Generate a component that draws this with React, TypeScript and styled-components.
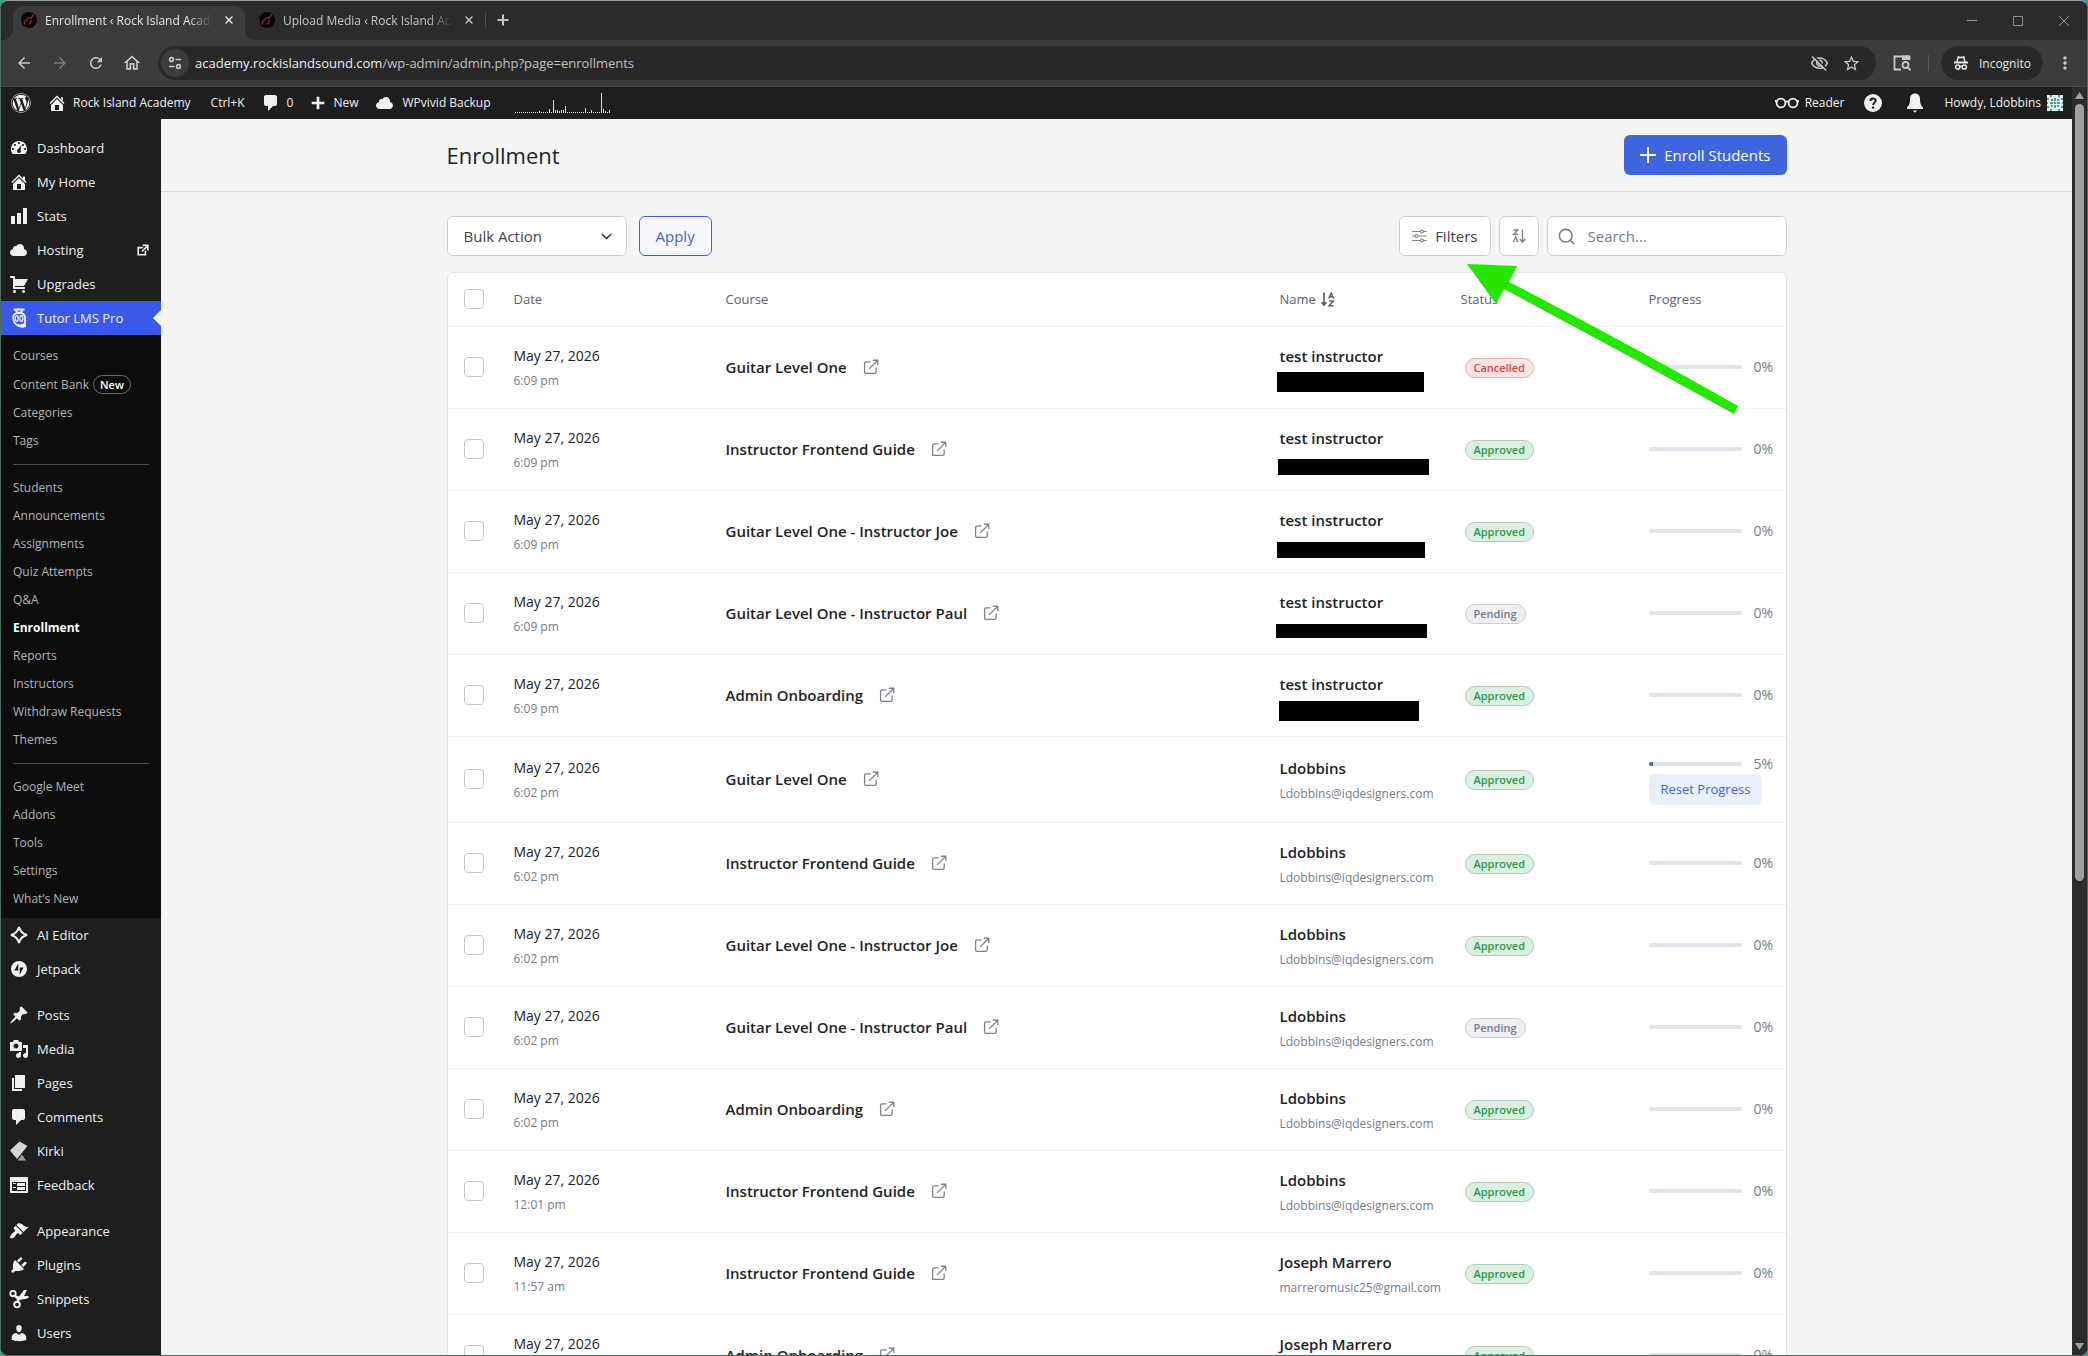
import React from "react";
import styled, { createGlobalStyle, css } from "styled-components";
import { FaWordpress } from "react-icons/fa";
import {
  MdArrowBack,
  MdArrowForward,
  MdMoreVert,
  MdOutlineHome,
  MdOutlineVisibilityOff,
  MdRefresh,
  MdStarBorder,
} from "react-icons/md";
import { ChevronDown, Plus, Search, X } from "lucide-react";

const sans = `"Open Sans", "Noto Sans", "Liberation Sans", sans-serif`;

const GlobalStyle = createGlobalStyle`
  *, *::before, *::after { box-sizing: border-box; }
  body {
    margin: 0;
    background: #3f9a86;
    font-family: ${sans};
    font-size: 14px;
    color: #212327;
  }
  button, input, select { font: inherit; color: inherit; }
  button { cursor: pointer; }
  a { color: inherit; text-decoration: none; }
  ul { list-style: none; margin: 0; padding: 0; }
  svg { display: block; flex: none; }
`;

/* ---------- window ---------- */

const Window = styled.div`
  display: flex;
  flex-direction: column;
  height: 100vh;
  overflow: hidden;
  border: 1px solid #47715f;
  border-top-color: #9aa19c;
  border-radius: 8px;
  background: #1e1e1e;
`;

const TabStrip = styled.div`
  display: flex;
  align-items: flex-end;
  flex: none;
  height: 39px;
  padding-left: 12px;
  background: #2b2b2b;
  color: #c7c7c7;
`;

const Tab = styled.div<{ $active?: boolean }>`
  position: relative;
  display: flex;
  align-items: center;
  gap: 8px;
  width: ${(p) => (p.$active ? 232 : 240)}px;
  height: 34px;
  padding: 0 8px 6px ${(p) => (p.$active ? 8 : 14)}px;
  border-radius: 10px 10px 0 0;
  font-size: 12px;
  ${(p) =>
    p.$active &&
    css`
      background: #3c3c3c;
      color: #e6e6e6;
      &::before,
      &::after {
        content: "";
        position: absolute;
        bottom: 0;
        width: 10px;
        height: 10px;
      }
      &::before {
        left: -10px;
        background: radial-gradient(circle at 0 0, transparent 10px, #3c3c3c 10px);
      }
      &::after {
        right: -10px;
        background: radial-gradient(circle at 100% 0, transparent 10px, #3c3c3c 10px);
      }
    `}
`;

const TabTitle = styled.span`
  flex: 1;
  min-width: 0;
  overflow: hidden;
  white-space: nowrap;
  mask-image: linear-gradient(to right, #000 85%, transparent);
`;

const PlainButton = styled.button`
  display: flex;
  align-items: center;
  justify-content: center;
  padding: 0;
  border: 0;
  background: none;
`;

const TabClose = styled(PlainButton)`
  width: 16px;
  height: 16px;
`;

const NewTab = styled(PlainButton)`
  width: 34px;
  height: 28px;
  margin-bottom: 6px;
`;

const TabDivider = styled.span`
  width: 1px;
  height: 16px;
  margin-bottom: 12px;
  background: #4a4a4a;
`;

const WindowButtons = styled.div`
  display: flex;
  margin-left: auto;
  align-self: stretch;
  align-items: center;
  color: #8f8f8f;
`;

const WindowButton = styled(PlainButton)`
  width: 46px;
  height: 38px;
`;

const Toolbar = styled.div`
  display: flex;
  align-items: center;
  flex: none;
  height: 47px;
  padding: 0 12px 0 5px;
  border-bottom: 1px solid #4a4a4a;
  background: #3c3c3c;
  color: #c9c9c9;
`;

const NavButton = styled(PlainButton)<{ $dim?: boolean }>`
  width: 36px;
  height: 34px;
  color: ${(p) => (p.$dim ? "#7b7b7b" : "#c9c9c9")};
`;

const Omnibox = styled.div`
  display: flex;
  align-items: center;
  flex: 1;
  height: 34px;
  margin-left: 8px;
  padding: 0 8px 0 3px;
  border-radius: 17px;
  background: #282828;
`;

const SiteInfo = styled.span`
  display: flex;
  align-items: center;
  justify-content: center;
  width: 28px;
  height: 28px;
  border-radius: 14px;
  background: #3c3c3c;
`;

const Url = styled.span`
  flex: 1;
  margin-left: 6px;
  font-size: 13px;
  color: #c0c0c0;
  b { font-weight: 400; color: #ececec; }
`;

const OmniButton = styled(PlainButton)`
  width: 32px;
  height: 28px;
`;

const PanelButton = styled(PlainButton)`
  width: 34px;
  height: 34px;
  margin: 0 9px;
`;

const ToolDivider = styled.span`
  width: 1px;
  height: 16px;
  margin-right: 12px;
  background: #5b5b5b;
`;

const Incognito = styled.button`
  display: flex;
  align-items: center;
  gap: 10px;
  height: 34px;
  margin-right: 12px;
  padding: 0 12px;
  border: 0;
  border-radius: 17px;
  background: #282828;
  color: #e6e6e6;
  font-size: 12px;
`;

/* ---------- WordPress chrome ---------- */

const Page = styled.div`
  display: flex;
  flex: 1;
  min-height: 0;
`;

const Document = styled.div`
  display: flex;
  flex-direction: column;
  flex: 1;
  min-width: 0;
`;

const AdminBar = styled.nav`
  display: flex;
  align-items: center;
  flex: none;
  height: 32px;
  padding: 0 9px 0 10px;
  background: #1e1e1e;
  color: #f0f0f1;
  font-size: 12px;
`;

const BarLink = styled.a<{ $gap?: number; $ml?: number }>`
  display: flex;
  align-items: center;
  gap: ${(p) => p.$gap ?? 6}px;
  margin-left: ${(p) => p.$ml ?? 16}px;
  line-height: 32px;
  white-space: nowrap;
`;

const BarRight = styled.div`
  display: flex;
  align-items: center;
  margin-left: auto;
`;

const Columns = styled.div`
  display: flex;
  flex: 1;
  min-height: 0;
  overflow: hidden;
`;

const Sidebar = styled.nav`
  flex: none;
  width: 160px;
  padding-top: 12px;
  background: #1e1e1e;
  color: #f0f0f1;
`;

const MenuLink = styled.a<{ $current?: boolean; $gapTop?: boolean }>`
  position: relative;
  display: flex;
  align-items: center;
  gap: 8px;
  height: 34px;
  margin-top: ${(p) => (p.$gapTop ? 12 : 0)}px;
  padding: 0 10px 0 8px;
  font-size: 13px;
  ${(p) =>
    p.$current &&
    css`
      background: #3b59e8;
      &::after {
        content: "";
        position: absolute;
        right: 0;
        top: 9px;
        border: 8px solid transparent;
        border-left: 0;
        border-right-color: #f5f5f5;
      }
    `}
`;

const MenuLabel = styled.span`
  flex: 1;
`;

const SubMenu = styled.ul`
  padding: 7px 12px 5px;
  background: #0d0d0d;
`;

const SubLink = styled.a<{ $current?: boolean }>`
  display: flex;
  align-items: center;
  gap: 4px;
  padding: 5px 0;
  line-height: 18px;
  font-size: 12px;
  white-space: nowrap;
  color: ${(p) => (p.$current ? "#ffffff" : "#b4b4b5")};
  font-weight: ${(p) => (p.$current ? 700 : 400)};
`;

const SubDivider = styled.li`
  height: 1px;
  margin: 9px 0;
  background: #4d4d4d;
`;

const NewBadge = styled.span`
  padding: 0 6px;
  border: 1px solid #6a6a6a;
  border-radius: 10px;
  line-height: 17px;
  font-size: 11px;
  font-weight: 600;
  color: #ffffff;
`;

const ScrollBar = styled.div`
  display: flex;
  flex-direction: column;
  align-items: center;
  flex: none;
  width: 15px;
  padding: 5px 0;
  background: #2c2c2c;
`;

const ScrollTrack = styled.div`
  flex: 1;
  width: 9px;
  margin: 5px 0;
`;

const ScrollThumb = styled.div`
  height: 63%;
  border-radius: 5px;
  background: #9f9f9f;
`;

/* ---------- content ---------- */

const Main = styled.main`
  flex: 1;
  min-width: 0;
  background: #f5f5f5;
`;

const Header = styled.header`
  border-bottom: 1px solid #dcdcdd;
`;

const Container = styled.div`
  max-width: 1340px;
  margin: 0 auto;
`;

const HeaderRow = styled(Container)`
  display: flex;
  align-items: center;
  justify-content: space-between;
  padding: 16px 0;
`;

const Title = styled.h1`
  margin: 0;
  font-size: 22px;
  line-height: 32px;
  font-weight: 400;
`;

const PrimaryButton = styled.button`
  display: flex;
  align-items: center;
  gap: 8px;
  height: 40px;
  padding: 0 16px;
  border: 0;
  border-radius: 6px;
  background: #3e64de;
  color: #ffffff;
  font-size: 15px;
`;

const Body = styled(Container)`
  position: relative;
  padding-top: 24px;
`;

const Controls = styled.div`
  display: flex;
  align-items: center;
  gap: 8px;
  margin-bottom: 16px;
`;

const SelectBox = styled.label`
  display: grid;
  align-items: center;
  width: 180px;
  margin-right: 4px;
  color: #41454f;
  > * { grid-area: 1 / 1; }
  > svg { justify-self: end; margin-right: 12px; pointer-events: none; }
`;

const Select = styled.select`
  appearance: none;
  width: 100%;
  height: 40px;
  padding: 0 16px;
  border: 1px solid #cdcfd5;
  border-radius: 6px;
  background: #ffffff;
  font-size: 15px;
`;

const ApplyButton = styled.button`
  height: 40px;
  margin-right: auto;
  padding: 0 16px;
  border: 1px solid #3e64de;
  border-radius: 6px;
  background: #f6f8fe;
  color: #4565cb;
  font-size: 15px;
`;

const ToolButton = styled.button`
  display: flex;
  align-items: center;
  justify-content: center;
  gap: 8px;
  min-width: 40px;
  height: 40px;
  padding: 0 12px;
  border: 1px solid #cdcfd5;
  border-radius: 6px;
  background: #ffffff;
  color: #41454f;
  font-size: 15px;
  > svg { color: #7d828c; }
`;

const SearchBox = styled.label`
  display: flex;
  align-items: center;
  gap: 12px;
  width: 240px;
  height: 40px;
  padding: 0 9px;
  border: 1px solid #cdcfd5;
  border-radius: 6px;
  background: #ffffff;
  color: #757c8e;
`;

const SearchInput = styled.input`
  flex: 1;
  min-width: 0;
  padding: 0;
  border: 0;
  outline: 0;
  background: none;
  font-size: 15px;
  &::placeholder { color: #757c8e; opacity: 1; }
`;

const TableCard = styled.div`
  border: 1px solid #e3e5ea;
  border-radius: 6px;
  background: #ffffff;
`;

const Table = styled.table`
  width: 100%;
  table-layout: fixed;
  border-collapse: collapse;
`;

const Col = styled.col<{ $w?: number }>`
  width: ${(p) => (p.$w ? `${p.$w}px` : "auto")};
`;

const Th = styled.th`
  height: 53px;
  padding: 0 16px;
  text-align: left;
  font-size: 13px;
  font-weight: 400;
  color: #5b616f;
`;

const ThSort = styled.span`
  display: flex;
  align-items: center;
  gap: 5px;
`;

const Tr = styled.tr<{ $tall?: boolean }>`
  height: ${(p) => (p.$tall ? 86 : 82)}px;
  border-top: 1px solid #f0f1f2;
`;

const Td = styled.td<{ $inset?: boolean }>`
  padding: 0 0 0 ${(p) => (p.$inset ? 20 : 16)}px;
  vertical-align: middle;
`;

const Checkbox = styled.input`
  display: block;
  appearance: none;
  width: 20px;
  height: 20px;
  margin: 0;
  border: 1px solid #c4c7cf;
  border-radius: 4px;
  background: #ffffff;
`;

const DateText = styled.div`
  line-height: 24px;
  margin-bottom: 4px;
  font-size: 14px;
`;

const TimeText = styled.div`
  line-height: 18px;
  font-size: 12px;
  color: #757c8e;
`;

const Course = styled.div`
  display: flex;
  align-items: center;
  gap: 16px;
  font-size: 15px;
  font-weight: 600;
`;

const CourseLink = styled.a`
  color: #7d828c;
`;

const StudentName = styled.div`
  line-height: 26px;
  margin-bottom: 4px;
  font-size: 15px;
  font-weight: 600;
`;

const Email = styled.div`
  position: relative;
  height: 18px;
  line-height: 18px;
  font-size: 12px;
  color: #757c8e;
`;

const Redaction = styled.span<{ $x: number; $y: number; $w: number; $h: number }>`
  position: absolute;
  left: ${(p) => p.$x}px;
  top: ${(p) => p.$y}px;
  width: ${(p) => p.$w}px;
  height: ${(p) => p.$h}px;
  background: #000000;
`;

type Status = "Approved" | "Pending" | "Cancelled";

const tones: Record<Status, string> = {
  Approved: "color: #2a9a47; background: #dcf0e2; border-color: #a9cfb5;",
  Pending: "color: #757c8e; background: #eff0f3; border-color: #cbced6;",
  Cancelled: "color: #e0443c; background: #fde3e2; border-color: #f0aaa8;",
};

const Badge = styled.span<{ $status: Status }>`
  display: inline-block;
  padding: 0 8px;
  border: 1px solid;
  border-radius: 10px;
  line-height: 18px;
  font-size: 11px;
  font-weight: 600;
  vertical-align: middle;
  ${(p) => tones[p.$status]}
`;

const ProgressLine = styled.div`
  display: flex;
  align-items: center;
  gap: 12px;
  line-height: 20px;
  font-size: 14px;
  color: #757c8e;
`;

const Track = styled.div`
  width: 93px;
  height: 4px;
  border-radius: 2px;
  overflow: hidden;
  background: #e3e4ea;
`;

const Fill = styled.div`
  height: 100%;
  background: #3e64de;
`;

const ResetButton = styled.button`
  display: block;
  height: 31px;
  padding: 0 12px;
  border: 0;
  border-radius: 6px;
  background: #eaeffc;
  color: #4565cb;
  font-size: 13px;
`;

const Pointer = styled.svg`
  position: absolute;
  top: 71px;
  right: 48px;
  pointer-events: none;
`;

/* ---------- drawings ---------- */

const Dash = ({ d, size = 20 }: { d: string; size?: number }) => (
  <svg width={size} height={size} viewBox="0 0 20 20" fill="currentColor" fillRule="evenodd">
    <path d={d} />
  </svg>
);

const dash = {
  dashboard:
    "M3.76 16h12.48c1.1-1.37 1.76-3.11 1.76-5 0-4.42-3.58-8-8-8s-8 3.58-8 8c0 1.89.66 3.63 1.76 5zM10 4c.55 0 1 .45 1 1s-.45 1-1 1-1-.45-1-1 .45-1 1-1zM6 6c.55 0 1 .45 1 1s-.45 1-1 1-1-.45-1-1 .45-1 1-1zm8 0c.55 0 1 .45 1 1s-.45 1-1 1-1-.45-1-1 .45-1 1-1zm-1.6 1.3L11.5 12.2c.3.3.4.7.4 1 0 1.1-.8 1.8-1.9 1.8s-2-.9-2-2c0-.9.6-1.6 1.4-1.9zM4 10c.55 0 1 .45 1 1s-.45 1-1 1-1-.45-1-1 .45-1 1-1zm12 0c.55 0 1 .45 1 1s-.45 1-1 1-1-.45-1-1 .45-1 1-1z",
  home: "M16 8.5l1.53 1.53-1.06 1.06L10 4.6l-6.47 6.49-1.06-1.06L10 2.5l4 4v-2h2v4zm-6-2.46l6 5.99V18H4v-5.97zM12 17v-5H8v5h4z",
  stats: "M18 18V2h-4v16h4zm-6 0V7H8v11h4zm-6 0v-8H2v8h4z",
  cloud:
    "M14.9 9c1.8.2 3.1 1.7 3.1 3.5 0 1.9-1.6 3.5-3.5 3.5h-10C2.6 16 1 14.4 1 12.5 1 10.7 2.3 9.3 4.1 9 4 8.9 4 8.7 4 8.5 4 7.1 5.1 6 6.5 6c.3 0 .7.1.9.2C8.1 4.9 9.4 4 11 4c2.2 0 4 1.8 4 4 0 .4-.1.7-.1 1z",
  cart: "M6 13h9c.55 0 1 .45 1 1s-.45 1-1 1H5c-.55 0-1-.45-1-1V4H2c-.55 0-1-.45-1-1s.45-1 1-1h3c.55 0 1 .45 1 1v2h13l-4 7H6v1zm-.5 3c.83 0 1.5.67 1.5 1.5S6.33 19 5.5 19 4 18.33 4 17.5 4.67 16 5.5 16zm9 0c.83 0 1.5.67 1.5 1.5s-.67 1.5-1.5 1.5-1.5-.67-1.5-1.5.67-1.5 1.5-1.5z",
  posts:
    "M10.44 3.02l1.82-1.82 6.36 6.35-1.83 1.82c-1.05-.68-2.48-.57-3.41.36l-.75.75c-.92.93-1.04 2.35-.35 3.41l-1.83 1.82-2.41-2.41-2.8 2.79c-.42.42-3.38 2.71-3.8 2.29s1.86-3.39 2.28-3.81l2.79-2.79L4.1 9.36l1.83-1.82c1.05.69 2.48.57 3.4-.36l.75-.75c.93-.92 1.05-2.35.36-3.41z",
  media:
    "M13 11V4c0-.55-.45-1-1-1h-1.67L9 1H5L3.67 3H2c-.55 0-1 .45-1 1v7c0 .55.45 1 1 1h10c.55 0 1-.45 1-1zM7 4.5c1.38 0 2.5 1.12 2.5 2.5S8.38 9.5 7 9.5 4.5 8.38 4.5 7 5.62 4.5 7 4.5zM14 6h5v10.5c0 1.38-1.12 2.5-2.5 2.5S14 17.88 14 16.5s1.12-2.5 2.5-2.5c.17 0 .34.02.5.05V9h-3V6zm-4 8.05V13h2v3.5c0 1.38-1.12 2.5-2.5 2.5S7 17.88 7 16.5 8.12 14 9.5 14c.17 0 .34.02.5.05z",
  pages: "M6 15V2h10v13H6zm-1 1h8v2H3V5h2v11z",
  comments:
    "M5 2h9c1.1 0 2 .9 2 2v7c0 1.1-.9 2-2 2h-2l-5 5v-5H5c-1.1 0-2-.9-2-2V4c0-1.1.9-2 2-2z",
  feedback:
    "M2 2h16c.55 0 1 .45 1 1v14c0 .55-.45 1-1 1H2c-.55 0-1-.45-1-1V3c0-.55.45-1 1-1zm15 14V7H3v9h14zM4 8v1h3V8H4zm4 0v3h8V8H8zm-4 4v1h3v-1H4zm4 0v3h8v-3H8z",
  appearance:
    "M14.48 11.06L7.41 3.99l1.5-1.5c.5-.56 2.3-.47 3.51.32 1.21.8 1.43 1.28 2.91 2.1 1.18.64 2.45 1.26 4.45.85zm-.71.71L6.7 4.7 4.93 6.47c-.39.39-.39 1.02 0 1.41l1.06 1.06c.39.39.39 1.03 0 1.42-.6.6-1.43 1.11-2.21 1.69-.35.26-.7.53-1.01.84C1.43 14.23.4 16.08 1.4 17.07c.99 1 2.84-.03 4.18-1.36.31-.31.58-.66.85-1.02.57-.78 1.08-1.61 1.69-2.21.39-.39 1.02-.39 1.41 0l1.06 1.06c.39.39 1.02.39 1.41 0z",
  plugins:
    "M13.11 4.36L9.87 7.6 8 5.73l3.24-3.24c.35-.34 1.05-.2 1.56.32.52.51.66 1.21.31 1.55zm-8 1.77l.91-1.12 9.01 9.01-1.19.84c-.71.71-2.63 1.16-3.82 1.16H6.14L4.9 17.26c-.59.59-1.54.59-2.12 0-.59-.58-.59-1.53 0-2.12l1.24-1.24v-3.88c0-1.13.4-3.19 1.09-3.89zm7.26 3.97l3.24-3.24c.34-.35 1.04-.21 1.55.31.52.51.66 1.21.31 1.55l-3.24 3.25z",
  users:
    "M10 9.25c-2.27 0-2.73-3.44-2.73-3.44C7 4.02 7.82 2 9.97 2c2.16 0 2.98 2.02 2.71 3.81 0 0-.41 3.44-2.68 3.44zm0 2.57L12.72 10c2.39 0 4.52 2.33 4.52 4.53v2.49s-3.65 1.13-7.24 1.13c-3.65 0-7.24-1.13-7.24-1.13v-2.49c0-2.25 1.94-4.48 4.47-4.48z",
  external: "M9 3h8v8l-2-1V6.92l-5.6 5.59-1.41-1.41L14.08 5H10zm3 12v-3l2-2v7H3V6h8L9 8H5v7h7z",
  plus: "M11.5 3v5.500H17v3h-5.500V17h-3v-5.500H3v-3h5.500V3z",
  jetpack:
    "M10 2a8 8 0 1 0 0 16 8 8 0 0 0 0-16zM9.3 11.4H5.4L9.3 4.2zM10.7 15.8V8.6h3.9z",
};

const TutorIcon = () => (
  <svg width="20" height="20" viewBox="0 0 20 20" fill="none" stroke="currentColor">
    <path d="M4.500 1.500h11M7 2c0 2 1 2.800 3 2.800s3-.8 3-2.800" strokeWidth="1.800" />
    <path d="M4.200 9c0-2.600 2.400-4.200 5.800-4.200S16 6.400 16 9.500V18.500c-2 .5-4.500.2-6.500-.6C6 16.500 4.200 13.500 4.200 9z" strokeWidth="1.800" />
    <path d="M8 16.500c3 .9 6 .4 7.500-1.500v3.500c-2.500.6-5.500 0-7.500-2z" fill="currentColor" />
    <ellipse cx="7.800" cy="10.500" rx="1.500" ry="2.800" strokeWidth="1.300" />
    <ellipse cx="12.400" cy="10.500" rx="1.500" ry="2.800" strokeWidth="1.300" />
  </svg>
);

const SparkIcon = () => (
  <svg width="20" height="20" viewBox="0 0 20 20" fill="none" stroke="currentColor" strokeWidth="2">
    <path d="M10 2c1.200 4.800 3.200 6.800 8 8-4.800 1.200-6.800 3.200-8 8-1.200-4.800-3.200-6.800-8-8 4.800-1.200 6.800-3.200 8-8z" />
  </svg>
);

const KirkiIcon = () => (
  <svg width="20" height="20" viewBox="0 0 20 20">
    <path d="M10.500.5 18.500 5 8 18 1 9.500z" fill="#d0d6d7" />
    <path d="M13 13.500 17 19.500H8.500z" fill="#9a9d9f" />
  </svg>
);

const ScissorsIcon = () => (
  <svg width="20" height="20" viewBox="0 0 20 20" fill="none" stroke="currentColor">
    <circle cx="4" cy="4.600" r="2.700" strokeWidth="1.900" />
    <circle cx="8" cy="15.600" r="2.800" strokeWidth="1.900" />
    <path d="M6.200 6 10 7.500l5-6.500h3l-3 6h4.500v1.800l-2 1-6.300.9-2 2.600-1.700.2.300-3.500L5.300 8z" fill="currentColor" stroke="none" />
  </svg>
);

const Favicon = () => (
  <svg width="16" height="16" viewBox="0 0 16 16">
    <circle cx="8" cy="8" r="8" fill="#0c0506" />
    <path
      d="M13 2 9.500 6.500M9.500 6c-2-.5-3.500.5-4 2-2 .5-3 2.500-1.500 4.500M8 12c2-.5 2.500-2 2-4"
      fill="none"
      stroke="#8f2a30"
      strokeWidth="1.300"
    />
  </svg>
);

const TuneIcon = () => (
  <svg width="16" height="16" viewBox="0 0 16 16" fill="none" stroke="currentColor" strokeWidth="1.600">
    <circle cx="4.500" cy="4.500" r="1.900" />
    <path d="M8.500 4.500H14M2 11.500h5.500" />
    <circle cx="11.500" cy="11.500" r="1.900" />
  </svg>
);

const TabSearchIcon = () => (
  <svg width="18" height="18" viewBox="0 0 18 18" fill="none" stroke="currentColor" strokeWidth="1.800">
    <path d="M8 15.500H1.500v-13H16" />
    <path d="M9 1.600h8.400v4.400H9z" fill="currentColor" stroke="none" />
    <circle cx="12.500" cy="11" r="3" />
    <path d="m14.700 13.200 3 3.300" />
  </svg>
);

const IncognitoIcon = () => (
  <svg width="16" height="16" viewBox="0 0 16 16" fill="none" stroke="currentColor" strokeWidth="1.500">
    <path d="M4 7 5.200 2c1.800.7 3.800.7 5.600 0L12 7" />
    <path d="M1 7.500h14" strokeWidth="1.800" />
    <circle cx="4.700" cy="12" r="2.100" />
    <circle cx="11.300" cy="12" r="2.100" />
    <path d="M6.800 11.500c.8-.4 1.600-.4 2.400 0" />
  </svg>
);

const GlassesIcon = () => (
  <svg width="24" height="16" viewBox="0 0 24 16" fill="none" stroke="currentColor" strokeWidth="1.800">
    <circle cx="6" cy="8" r="4.400" />
    <circle cx="18" cy="8" r="4.400" />
    <path d="M10.200 6.800c1.200-.6 2.400-.6 3.600 0M0 5.500 2 7M24 5.500 22 7" />
  </svg>
);

const HelpIcon = () => (
  <svg width="18" height="18" viewBox="0 0 18 18">
    <circle cx="9" cy="9" r="9" fill="currentColor" />
    <path d="M6.500 7c0-3.300 5.200-3.200 5.200-.2 0 1.900-2.600 2-2.600 4.200" fill="none" stroke="#1e1e1e" strokeWidth="1.900" />
    <circle cx="9.100" cy="13.600" r="1.200" fill="#1e1e1e" />
  </svg>
);

const BellIcon = () => (
  <svg width="18" height="20" viewBox="0 0 18 20" fill="currentColor">
    <path d="M9 .5c-3.300 0-5 2.300-5 5.500 0 4-.5 6-3 8.500V16h16v-1.500c-2.500-2.500-3-4.500-3-8.500 0-3.200-1.700-5.500-5-5.500zM6.800 17.500h4.400L9 19.800z" />
  </svg>
);

const AvatarIcon = () => (
  <svg width="16" height="16" viewBox="0 0 16 16" shapeRendering="crispEdges">
    <path d="M0 0h16v16H0z" fill="#e3f2f1" />
    <path
      d="M3 0h2v2H3zM11 0h2v2h-2zM0 3h2v2H0zM4 4h2v2H4zM7 3h2v3H7zM10 4h2v2h-2zM14 3h2v2h-2zM3 7h3v2H3zM7 7h2v2H7zM10 7h3v2h-3zM0 7h1v2H0zM15 7h1v2h-1zM4 10h2v2H4zM7 10h2v3H7zM10 10h2v2h-2zM0 11h2v2H0zM14 11h2v2h-2zM3 14h2v2H3zM11 14h2v2h-2z"
      fill="#3fa09c"
    />
  </svg>
);

const sparkBars = [1, 1, 1, 1, 1, 1, 1, 1, 1, 1, 1, 1, 2, 1, 1, 1, 1, 4, 1, 13, 3, 3, 2, 3, 3, 7, 1, 1, 1, 1, 1, 1, 1, 1, 1, 5, 1, 1, 3, 1, 1, 1, 1, 20, 4, 2, 1, 3];

const Sparkline = () => (
  <svg width="96" height="20" viewBox="0 0 96 20" fill="#dcdcdc" shapeRendering="crispEdges">
    {sparkBars.map((h, i) => (
      <rect key={i} x={i * 2} y={20 - h} width="1" height={h} />
    ))}
  </svg>
);

const PlusIcon = () => (
  <svg width="16" height="16" viewBox="0 0 16 16" fill="none" stroke="currentColor" strokeWidth="2">
    <path d="M8 0v16M0 8h16" />
  </svg>
);

const OpenIcon = () => (
  <svg width="16" height="16" viewBox="0 0 17 17" fill="none" stroke="currentColor" strokeWidth="1.400">
    <path d="M8 3H3.200C2.300 3 1.700 3.600 1.700 4.500v9.300c0 .9.600 1.500 1.500 1.500h9.300c.9 0 1.500-.6 1.500-1.500V9" />
    <path d="M6.500 10.500 15.500 1.500M10.500 1.300h5.200v5.200" />
  </svg>
);

const SlidersIcon = () => (
  <svg width="15" height="14" viewBox="0 0 15 14" fill="none" stroke="currentColor" strokeWidth="1.200">
    <path d="M0 2.500h8M12 2.500h3M0 7h2.500M6.500 7H15M0 11.500h8M12 11.500h3" />
    <circle cx="10" cy="2.500" r="1.500" />
    <circle cx="4.500" cy="7" r="1.500" />
    <circle cx="10" cy="11.500" r="1.500" />
  </svg>
);

const SortOrderIcon = () => (
  <svg width="14" height="14" viewBox="0 0 14 14" fill="none" stroke="currentColor" strokeWidth="1.400">
    <path d="M1.500 1h4.300L1.500 5.500H6M1.300 13l2.300-5 2.300 5M10.500.5v12M7.800 10l2.700 3 2.700-3" />
  </svg>
);

const SortNameIcon = () => (
  <svg width="14" height="15" viewBox="0 0 14 15" fill="none" stroke="currentColor" strokeWidth="1.700">
    <path d="M3 .5v12.500M.6 10.300 3 13.200l2.400-2.900" />
    <path d="M7.800 6.500 10.200 1l2.400 5.500M8.500 4.800h3.400M8 9h4.300L8 13.700h4.600" strokeWidth="1.500" />
  </svg>
);

/* ---------- data ---------- */

interface Row {
  time: string;
  course: string;
  name: string;
  email?: string;
  mask?: [number, number, number, number];
  status: Status;
  progress: number;
}

const guide = "Instructor Frontend Guide";
const ldobbins = { name: "Ldobbins", email: "Ldobbins@iqdesigners.com" };
const joseph = { name: "Joseph Marrero", email: "marreromusic25@gmail.com" };

const rows: Row[] = [
  { time: "6:09 pm", course: "Guitar Level One", name: "test instructor", mask: [-3, -1, 147, 20], status: "Cancelled", progress: 0 },
  { time: "6:09 pm", course: guide, name: "test instructor", mask: [-2, 4, 151, 16], status: "Approved", progress: 0 },
  { time: "6:09 pm", course: "Guitar Level One - Instructor Joe", name: "test instructor", mask: [-3, 5, 148, 16], status: "Approved", progress: 0 },
  { time: "6:09 pm", course: "Guitar Level One - Instructor Paul", name: "test instructor", mask: [-4, 5, 151, 14], status: "Pending", progress: 0 },
  { time: "6:09 pm", course: "Admin Onboarding", name: "test instructor", mask: [-1, 0, 140, 20], status: "Approved", progress: 0 },
  { time: "6:02 pm", course: "Guitar Level One", ...ldobbins, status: "Approved", progress: 5 },
  { time: "6:02 pm", course: guide, ...ldobbins, status: "Approved", progress: 0 },
  { time: "6:02 pm", course: "Guitar Level One - Instructor Joe", ...ldobbins, status: "Approved", progress: 0 },
  { time: "6:02 pm", course: "Guitar Level One - Instructor Paul", ...ldobbins, status: "Pending", progress: 0 },
  { time: "6:02 pm", course: "Admin Onboarding", ...ldobbins, status: "Approved", progress: 0 },
  { time: "12:01 pm", course: guide, ...ldobbins, status: "Approved", progress: 0 },
  { time: "11:57 am", course: guide, ...joseph, status: "Approved", progress: 0 },
  { time: "11:57 am", course: "Admin Onboarding", ...joseph, status: "Approved", progress: 0 },
];

interface MenuEntry {
  label: string;
  icon: React.ReactNode;
  gapTop?: boolean;
  external?: boolean;
  current?: boolean;
}

const topMenu: MenuEntry[] = [
  { label: "Dashboard", icon: <Dash d={dash.dashboard} /> },
  { label: "My Home", icon: <Dash d={dash.home} /> },
  { label: "Stats", icon: <Dash d={dash.stats} /> },
  { label: "Hosting", icon: <Dash d={dash.cloud} />, external: true },
  { label: "Upgrades", icon: <Dash d={dash.cart} /> },
  { label: "Tutor LMS Pro", icon: <TutorIcon />, current: true },
];

const subMenu: string[][] = [
  ["Courses", "Content Bank", "Categories", "Tags"],
  ["Students", "Announcements", "Assignments", "Quiz Attempts", "Q&A", "Enrollment", "Reports", "Instructors", "Withdraw Requests", "Themes"],
  ["Google Meet", "Addons", "Tools", "Settings", "What’s New"],
];

const bottomMenu: MenuEntry[] = [
  { label: "AI Editor", icon: <SparkIcon /> },
  { label: "Jetpack", icon: <Dash d={dash.jetpack} /> },
  { label: "Posts", icon: <Dash d={dash.posts} />, gapTop: true },
  { label: "Media", icon: <Dash d={dash.media} /> },
  { label: "Pages", icon: <Dash d={dash.pages} /> },
  { label: "Comments", icon: <Dash d={dash.comments} /> },
  { label: "Kirki", icon: <KirkiIcon /> },
  { label: "Feedback", icon: <Dash d={dash.feedback} /> },
  { label: "Appearance", icon: <Dash d={dash.appearance} />, gapTop: true },
  { label: "Plugins", icon: <Dash d={dash.plugins} /> },
  { label: "Snippets", icon: <ScissorsIcon /> },
  { label: "Users", icon: <Dash d={dash.users} /> },
];

const MenuItem = ({ item }: { item: MenuEntry }) => (
  <MenuLink href="#" $current={item.current} $gapTop={item.gapTop}>
    {item.icon}
    <MenuLabel>{item.label}</MenuLabel>
    {item.external && <Dash d={dash.external} size={16} />}
  </MenuLink>
);

const BrowserChrome = () => (
  <>
    <TabStrip>
      <Tab $active>
        <Favicon />
        <TabTitle>Enrollment ‹ Rock Island Academy</TabTitle>
        <TabClose aria-label="Close tab"><X size={12} strokeWidth={3} /></TabClose>
      </Tab>
      <Tab>
        <Favicon />
        <TabTitle>Upload Media ‹ Rock Island Academy</TabTitle>
        <TabClose aria-label="Close tab"><X size={12} strokeWidth={3} /></TabClose>
      </Tab>
      <TabDivider />
      <NewTab aria-label="New tab"><Plus size={16} strokeWidth={3} /></NewTab>
      <WindowButtons>
        <WindowButton aria-label="Minimize">
          <svg width="10" height="10" viewBox="0 0 10 10" stroke="currentColor"><path d="M0 4.500h10" /></svg>
        </WindowButton>
        <WindowButton aria-label="Maximize">
          <svg width="10" height="10" viewBox="0 0 10 10" fill="none" stroke="currentColor"><path d="M.5.500h9v9h-9z" /></svg>
        </WindowButton>
        <WindowButton aria-label="Close">
          <svg width="10" height="10" viewBox="0 0 10 10" stroke="currentColor"><path d="m0 0 10 10M10 0 0 10" /></svg>
        </WindowButton>
      </WindowButtons>
    </TabStrip>
    <Toolbar>
      <NavButton aria-label="Back"><MdArrowBack size={18} /></NavButton>
      <NavButton aria-label="Forward" $dim><MdArrowForward size={18} /></NavButton>
      <NavButton aria-label="Reload"><MdRefresh size={18} /></NavButton>
      <NavButton aria-label="Home"><MdOutlineHome size={20} /></NavButton>
      <Omnibox>
        <SiteInfo><TuneIcon /></SiteInfo>
        <Url><b>academy.rockislandsound.com</b>/wp-admin/admin.php?page=enrollments</Url>
        <OmniButton aria-label="Third-party cookies blocked"><MdOutlineVisibilityOff size={19} /></OmniButton>
        <OmniButton aria-label="Bookmark this tab"><MdStarBorder size={19} /></OmniButton>
      </Omnibox>
      <PanelButton aria-label="Side panel"><TabSearchIcon /></PanelButton>
      <ToolDivider />
      <Incognito><IncognitoIcon />Incognito</Incognito>
      <PlainButton aria-label="Menu"><MdMoreVert size={20} /></PlainButton>
    </Toolbar>
  </>
);

const WpAdminBar = () => (
  <AdminBar aria-label="Toolbar">
    <BarLink href="#" $ml={0} aria-label="About WordPress"><FaWordpress size={20} /></BarLink>
    <BarLink href="#"><Dash d={dash.home} />Rock Island Academy</BarLink>
    <BarLink href="#" $ml={20}>Ctrl+K</BarLink>
    <BarLink href="#"><Dash d={dash.comments} />0</BarLink>
    <BarLink href="#"><Dash d={dash.plus} size={18} />New</BarLink>
    <BarLink href="#" $gap={8}><Dash d={dash.cloud} />WPvivid Backup</BarLink>
    <BarLink href="#" $ml={24} aria-label="Site stats"><Sparkline /></BarLink>
    <BarRight>
      <BarLink href="#"><GlassesIcon />Reader</BarLink>
      <BarLink href="#" $ml={20} aria-label="Help"><HelpIcon /></BarLink>
      <BarLink href="#" $ml={24} aria-label="Notifications"><BellIcon /></BarLink>
      <BarLink href="#" $ml={20}>Howdy, Ldobbins<AvatarIcon /></BarLink>
    </BarRight>
  </AdminBar>
);

const EnrollmentTable = () => (
  <TableCard>
    <Table>
      <colgroup>
        <Col $w={50} />
        <Col $w={212} />
        <Col />
        <Col $w={181} />
        <Col $w={188} />
        <Col $w={153} />
      </colgroup>
      <thead>
        <tr>
          <Th><Checkbox type="checkbox" aria-label="Select all" /></Th>
          <Th>Date</Th>
          <Th>Course</Th>
          <Th><ThSort>Name<SortNameIcon /></ThSort></Th>
          <Th>Status</Th>
          <Th>Progress</Th>
        </tr>
      </thead>
      <tbody>
        {rows.map((row, i) => (
          <Tr key={i} $tall={row.progress > 0}>
            <Td><Checkbox type="checkbox" aria-label={`Select ${row.course}`} /></Td>
            <Td>
              <DateText>May 27, 2026</DateText>
              <TimeText>{row.time}</TimeText>
            </Td>
            <Td>
              <Course>
                {row.course}
                <CourseLink href="#" aria-label={`Open ${row.course}`}><OpenIcon /></CourseLink>
              </Course>
            </Td>
            <Td>
              <StudentName>{row.name}</StudentName>
              <Email>
                {row.email}
                {row.mask && <Redaction $x={row.mask[0]} $y={row.mask[1]} $w={row.mask[2]} $h={row.mask[3]} />}
              </Email>
            </Td>
            <Td $inset><Badge $status={row.status}>{row.status}</Badge></Td>
            <Td>
              <ProgressLine>
                <Track><Fill style={{ width: `${row.progress}%` }} /></Track>
                {row.progress}%
              </ProgressLine>
              {row.progress > 0 && <ResetButton>Reset Progress</ResetButton>}
            </Td>
          </Tr>
        ))}
      </tbody>
    </Table>
  </TableCard>
);

export default function App() {
  return (
    <>
      <GlobalStyle />
      <Window>
        <BrowserChrome />
        <Page>
          <Document>
            <WpAdminBar />
            <Columns>
              <Sidebar aria-label="Main menu">
                {topMenu.map((item) => <MenuItem key={item.label} item={item} />)}
                <SubMenu>
                  {subMenu.map((group, g) => (
                    <React.Fragment key={g}>
                      {g > 0 && <SubDivider role="separator" />}
                      {group.map((label) => (
                        <li key={label}>
                          <SubLink href="#" $current={label === "Enrollment"}>
                            {label}
                            {label === "Content Bank" && <NewBadge>New</NewBadge>}
                          </SubLink>
                        </li>
                      ))}
                    </React.Fragment>
                  ))}
                </SubMenu>
                {bottomMenu.map((item) => <MenuItem key={item.label} item={item} />)}
              </Sidebar>
              <Main>
                <Header>
                  <HeaderRow>
                    <Title>Enrollment</Title>
                    <PrimaryButton><PlusIcon />Enroll Students</PrimaryButton>
                  </HeaderRow>
                </Header>
                <Body>
                  <Controls>
                    <SelectBox>
                      <Select aria-label="Bulk action" defaultValue="bulk">
                        <option value="bulk">Bulk Action</option>
                      </Select>
                      <ChevronDown size={17} strokeWidth={2} />
                    </SelectBox>
                    <ApplyButton>Apply</ApplyButton>
                    <ToolButton><SlidersIcon />Filters</ToolButton>
                    <ToolButton aria-label="Sort order"><SortOrderIcon /></ToolButton>
                    <SearchBox>
                      <Search size={19} strokeWidth={2} />
                      <SearchInput type="search" placeholder="Search..." aria-label="Search enrollments" />
                    </SearchBox>
                  </Controls>
                  <EnrollmentTable />
                  <Pointer width="272" height="152" viewBox="0 0 272 152" fill="#26e600">
                    <path d="M0 1 50 3 42 19Q158 79 271 143L267 151Q152 87 37 26L29 41z" />
                  </Pointer>
                </Body>
              </Main>
            </Columns>
          </Document>
          <ScrollBar aria-hidden="true">
            <svg width="9" height="7" viewBox="0 0 9 7" fill="#9f9f9f"><path d="M4.500 0 9 7H0z" /></svg>
            <ScrollTrack><ScrollThumb /></ScrollTrack>
            <svg width="9" height="7" viewBox="0 0 9 7" fill="#9f9f9f"><path d="M4.500 7 0 0h9z" /></svg>
          </ScrollBar>
        </Page>
      </Window>
    </>
  );
}
